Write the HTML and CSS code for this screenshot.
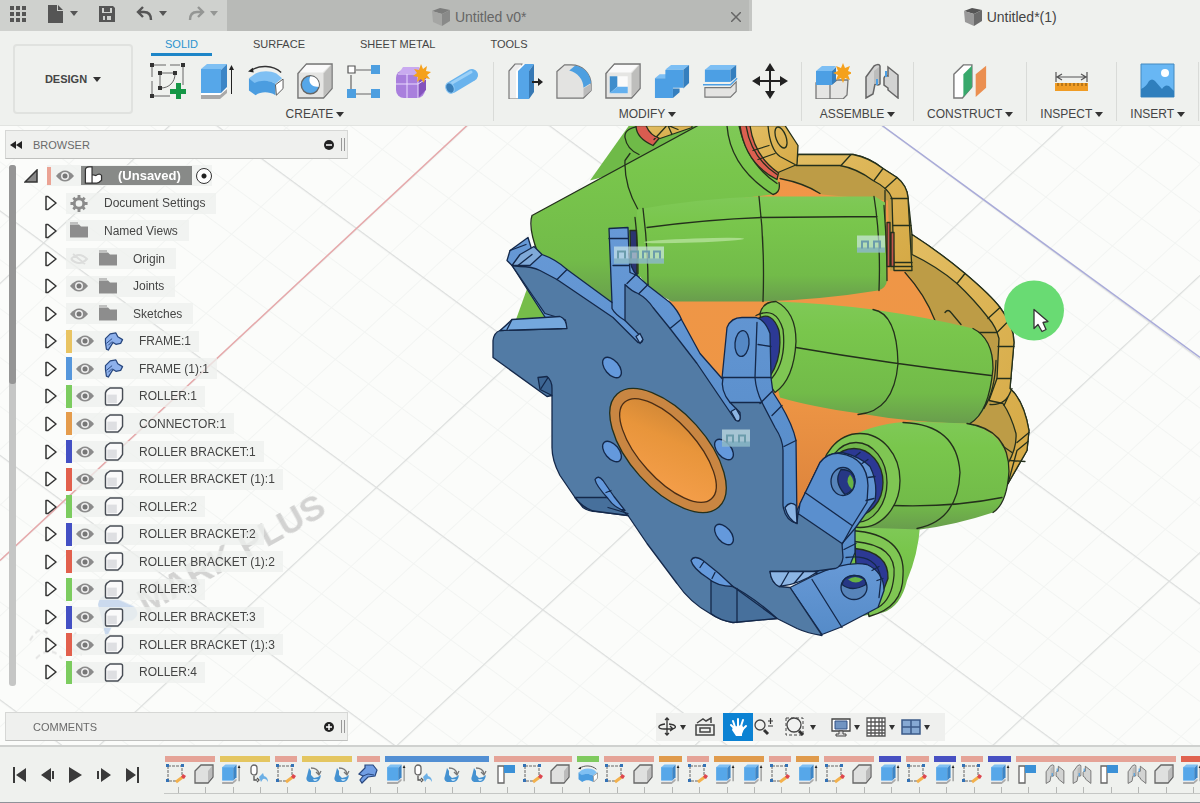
FILE: index.html
```html
<!DOCTYPE html>
<html lang="en">
<head>
    <meta charset="UTF-8">
    <meta name="viewport" content="width=device-width, initial-scale=1.0">
    <title>Untitled*(1)</title>
    <link rel="stylesheet" href="styles.css">
</head>
<body>
    <!-- Icon library -->
    <svg class="icon-library" aria-hidden="true">
        <symbol id="i-grid" viewBox="0 0 18 18"><path fill="#555" d="M1 1h4v4H1zM7 1h4v4H7zM13 1h4v4h-4zM1 7h4v4H1zM7 7h4v4H7zM13 7h4v4h-4zM1 13h4v4H1zM7 13h4v4H7zM13 13h4v4h-4z"/></symbol>
        <symbol id="i-file" viewBox="0 0 18 18"><path fill="#555" d="M1 0h9v6h6v12H1zM11 0l5 5h-5z"/></symbol>
        <symbol id="i-save" viewBox="0 0 18 18"><path fill="#555" fill-rule="evenodd" d="M1 1h14l2 2v14H1zM4 3v5h10V3h-2v4H6V3zM5 11v4h2v-4zM9 11v4h4v-4z"/></symbol>
        <symbol id="i-undo" viewBox="0 0 18 18"><path fill="none" stroke="#555" stroke-width="2.4" d="M7 2 2 7l5 5M2 7h6c5 0 7 3 7 8"/></symbol>
        <symbol id="i-redo" viewBox="0 0 18 18"><path fill="none" stroke="#949694" stroke-width="2.4" d="m11 2 5 5-5 5M16 7h-6c-5 0-7 3-7 8"/></symbol>
        <symbol id="i-cube" viewBox="0 0 18 18"><path fill="#555" d="M0 3 8 0l10 2-8 4z"/><path fill="#999" d="m0 3 10 3v12L1 14z"/><path fill="#6b6b6b" d="m10 6 8-4v11l-8 5z"/></symbol>

        <symbol id="i-sketch" viewBox="0 0 36 36">
            <path fill="none" stroke="#666" d="M4 2h12m4 0h10M2 4v10m0 4v13M33 4v18M4 33h16M10 10h14M10 10v14M25 11c0 8-6 14-14 14"/>
            <path fill="#333" d="M0 0h4v4H0zM31 0h4v4h-4zM0 31h4v4H0zM8 8h4v4H8zM23 8h4v4h-4zM8 23h4v4H8z"/>
            <path fill="#159746" d="M26 20h5v6h6v5h-6v6h-5v-6h-6v-5h6z"/>
        </symbol>
        <symbol id="i-extrude" viewBox="0 0 36 36">
            <path fill="#fff" d="M2 29h19l7-5v5l-6 5H2z"/><path fill="#a9a9a9" d="M2 32h19l7-6v4l-7 6H2z"/>
            <path fill="#7fc0f3" d="m2 6 6-5h20l-6 6H2z"/><path fill="#56a7e9" d="M2 6h20v24H2z"/><path fill="#3c85c6" d="m22 7 6-6v23l-6 6z"/>
            <path fill="#222" d="M32 6h1v25h-1zM30 7l2.500-5L35 7z"/>
        </symbol>
        <symbol id="i-revolve" viewBox="0 0 38 36">
            <path fill="none" stroke="#333" stroke-width="1.500" d="M3 7C12 1 26 1 35 9"/><path fill="#222" d="m0 8 5-4 1 5z"/>
            <path fill="#7fc0f3" d="m1 15 7-5c7-3 15-3 22 0l6 5-7 6c-6-4-15-4-22 0z"/><path fill="#4b9de0" d="M1 15l6 5c6-3 16-3 22 1v12c-7-4-15-4-21 0l-7-5z"/>
            <path fill="#fff" stroke="#555" d="m29 22 8-6v10l-7 7z"/>
        </symbol>
        <symbol id="i-hole" viewBox="0 0 38 38">
            <path fill="#e5e5e3" stroke="#777" stroke-width="1.500" d="M1 11 10 1h27v26L28 37H1z"/><path fill="#bebebc" d="m28 11 8-9v25l-8 9z"/><path fill="#fafafa" d="m3 10 7-8h25l-8 8z"/>
            <circle cx="14" cy="23" r="9.500" fill="#56a7e9" stroke="#666" stroke-width="1.500"/><path fill="#fff" d="M14 14c-3 7 2 12 9 11 1-6-3-11-9-11"/>
        </symbol>
        <symbol id="i-pattern" viewBox="0 0 36 36"><path stroke="#666" stroke-width="1.200" d="M10 7h16M5 12v14M10 31h16"/><path fill="#fff" stroke="#555" stroke-width="1.200" d="M2 3h7v7H2z"/><path fill="#4d9fe0" d="M25 2h9v9h-9zM1 26h9v9H1zM25 26h9v9h-9z"/></symbol>
        <symbol id="i-form" viewBox="0 0 36 36">
            <rect x="1" y="7" width="29" height="28" rx="8" fill="#a97fdd"/><path fill="#c9aaf0" d="M8 4h16l4 6H4z"/><path fill="#8453bd" d="m23 12 8-5v20l-8 8z"/>
            <path fill="none" stroke="#e9dbff" d="M12 11v24M1 21h22l8-5M3 11h20v24"/>
            <path fill="#f5a11c" d="m26 1 2 5 4-3-1 5 5 1-4 3 3 4-5-1-1 5-3-4-4 3 1-5-5-1 4-3-3-4 5 1z"/>
        </symbol>
        <symbol id="i-pipe" viewBox="0 0 36 36"><path stroke="#69b3ed" stroke-width="12" stroke-linecap="round" d="M8 24 28 12"/><path stroke="#9bd0f7" stroke-width="3" stroke-linecap="round" d="m8 20 19-11"/><ellipse cx="6" cy="25" rx="4" ry="5.500" transform="rotate(-25 6 25)" fill="#397eb8" stroke="#8cc8f5"/></symbol>

        <symbol id="i-presspull" viewBox="0 0 36 36"><path fill="#eee" stroke="#777" stroke-width="1.200" d="m2 8 6-7h7v35H2z"/><path fill="#fff" d="m9 8 7-7h3v34H9z"/><path fill="#55a5e8" d="m11 8 7-7h9l-5 7v28H11z"/><path fill="#3779b4" d="m22 8 5-7v28l-5 7z"/><path fill="#222" d="M25 18h6v-3l5 4-5 4v-3h-6z"/></symbol>
        <symbol id="i-fillet" viewBox="0 0 38 36"><path fill="#e3e3e1" stroke="#777" stroke-width="1.300" d="M1 8 9 1h7c12 0 21 9 21 21v6l-8 8H1z"/><path fill="#4d9fe0" d="M20 2c9 1 16 8 17 18l-8 5c0-8-6-16-15-18z"/><path fill="#bbb" d="m29 26 8-5v7l-8 7z"/></symbol>
        <symbol id="i-shell" viewBox="0 0 38 38"><path fill="#e5e5e3" stroke="#777" stroke-width="1.500" d="M1 11 10 1h27v26L28 37H1z"/><path fill="#bebebc" d="m28 11 8-9v25l-8 9z"/><path fill="#fafafa" d="m3 10 7-8h25l-8 8zM5 14h19v18H5z"/><path fill="#3e8dcc" d="M5 14h8v11l-8 7z"/><path fill="#64b0ee" d="M13 25h11v7H5z"/></symbol>
        <symbol id="i-combine" viewBox="0 0 38 36"><path fill="#7dbff4" d="m1 15 5-4h7V5l5-4h19l-6 5H14v9z"/><path fill="#4c9fe4" d="M1 15h11V6h19v19H20v11H1z"/><path fill="#357fbe" d="m31 6 6-5v19l-6 6zM20 26h7v4l-7 6z"/></symbol>
        <symbol id="i-split" viewBox="0 0 38 36"><path fill="#7dbff4" d="m2 6 6-5h27l-6 5z"/><path fill="#4c9fe4" d="M2 6h27v13H2z"/><path fill="#357fbe" d="m29 6 6-5v13l-6 5z"/><path fill="none" stroke="#4c9fe4" stroke-width="1.500" d="M0 22h29l7-7"/><path fill="#e4e4e2" stroke="#777" stroke-width="1.200" d="M2 25h27l6-6v10l-6 6H2z"/></symbol>
        <symbol id="i-move" viewBox="0 0 36 36"><path fill="#222" d="m18 0 5 8h-4v9h9v-4l8 5-8 5v-4h-9v9h4l-5 8-5-8h4v-9H8v4l-8-5 8-5v4h9V8h-4z"/></symbol>

        <symbol id="i-component" viewBox="0 0 36 36"><path fill="#e5e5e3" stroke="#777" stroke-width="1.300" d="M1 20h17l4-3h11l-1 15-4 4H1zM15 21v15"/><path fill="#7dbff4" d="m1 8 6-5h14l-4 5z"/><path fill="#4c9fe4" d="M1 8h16v14H1z"/><path fill="#357fbe" d="m17 8 4-4v14l-4 4z"/><path fill="#f5a11c" d="m28 0 2 5 5-2-2 5 5 2-5 2 2 5-5-2-2 5-2-5-5 2 2-5-5-2 5-2-2-5 5 2z"/></symbol>
        <symbol id="i-joint" viewBox="0 0 36 36"><path fill="#d2d3d2" stroke="#666" stroke-width="1.500" d="M2 14 10 3q5-3 6 0v18q-2 2-5 0L9 31l-7 4z"/><path fill="#bcbdbc" d="m10 8 5-4v16l-5 1z"/><path fill="#d2d3d2" stroke="#666" stroke-width="1.500" d="M20 15q1-3 4-2V4l10 8v23L24 27v-2l-4-3z"/><path fill="none" stroke="#4c9fe4" stroke-width="2" d="M13 16v6M22 8v6"/></symbol>
        <symbol id="i-plane" viewBox="0 0 38 36"><path fill="#fff" stroke="#777" stroke-width="1.500" d="M2 11 12 1h9v23L11 36H2z"/><path fill="#38a96c" d="M12 11 21 2v23l-9 10z"/><path fill="#eb8f50" d="M25 11 36 2v23L25 35z"/></symbol>
        <symbol id="i-measure" viewBox="0 0 36 36"><path fill="none" stroke="#555" stroke-width="1.200" d="M2 9v10M33 9v10M3 14h29M8 11l-5 3 5 3M27 11l5 3-5 3"/><path fill="#f09c24" d="M1 20h33v8H1z"/><path stroke="#80500b" d="M4 20v3m4-3v3m4-3v3m4-3v3m4-3v3m4-3v3m4-3v3m4-3v3"/></symbol>
        <symbol id="i-image" viewBox="0 0 36 36"><path fill="#68b7f4" stroke="#4289bf" d="M1 1h33v33H1z"/><path fill="#2f7fbd" d="M1 26q5-2 8-8 3-3 6 0l7 8q3-5 7-3l5 5v6H1z"/><circle cx="25" cy="10" r="4" fill="#fff"/></symbol>

        <symbol id="i-eye" viewBox="0 0 18 12"><path fill="#8b8b8b" d="M0 6Q9-5 18 6 9 17 0 6"/><circle cx="9" cy="6" r="4" fill="#eee"/><circle cx="9" cy="6" r="2.500" fill="#777"/></symbol>
        <symbol id="i-eye-off" viewBox="0 0 18 12"><path fill="none" stroke="#dcdddc" stroke-width="2" d="M1 6q8-8 16 0-8 8-16 0M3 1l12 10"/></symbol>
        <symbol id="i-folder" viewBox="0 0 20 16"><path fill="#8d8d8d" d="M1 0h8v1H1zM1 2h9l2 2h7v11H1z"/></symbol>
        <symbol id="i-gear" viewBox="0 0 20 20"><circle cx="10" cy="10" r="5" fill="none" stroke="#8b8b8b" stroke-width="3"/><path stroke="#8b8b8b" stroke-width="3" d="M10 1v4m0 10v4M1 10h4m10 0h4M4 4l2 2m8 8 2 2M16 4l-2 2M6 14l-2 2"/></symbol>
        <symbol id="i-body" viewBox="0 0 20 20"><path fill="#fafafa" stroke="#484d55" stroke-width="1.500" stroke-linejoin="round" d="M1 6q1-3 5-5h11q2 0 2 2v10q-2 4-5 6H3q-2 0-2-2z"/><path fill="#dedfe2" d="M3 8h10v9H3z"/></symbol>
        <symbol id="i-frame" viewBox="0 0 20 20"><path fill="#8eb1ec" stroke="#28477f" stroke-width="1.300" stroke-linejoin="round" d="M1 11V7l5-5 6-1 2 4 5 3-2 4-5 1-3-2-5 8-2-1z"/><path fill="none" stroke="#28477f" d="m2 12 6-5M4 14l4-4"/></symbol>
        <symbol id="i-assembly" viewBox="0 0 20 20"><path fill="#fff" stroke="#333" stroke-width="1.300" d="M2 4q0-3 4-3h3v8l4 1q4-3 6 0v5q-3 3-5 3H2zM9 9v9"/></symbol>
        <symbol id="i-expand" viewBox="0 0 12 16"><path fill="none" stroke="#333" stroke-width="1.500" stroke-linejoin="round" d="M1 1.500h2L11 8l-8 6.500H1z"/></symbol>
        <symbol id="i-open" viewBox="0 0 14 14"><path fill="#888" stroke="#333" stroke-width="1.500" d="M13 1v12H1z"/></symbol>

        <symbol id="t-sketch" viewBox="0 0 20 20"><path fill="none" stroke="#666" stroke-dasharray="3 1" d="M2 2h14v11M2 2v15h9"/><path fill="#3472b5" d="M0 0h3v3H0zM15 0h3v3h-3zM0 15h3v3H0z"/><path stroke="#f3b14c" stroke-width="3" d="m10 18 8-6"/><path fill="#dd4650" d="m17 10 3 2-2 3-3-2z"/></symbol>
        <symbol id="t-box" viewBox="0 0 20 20"><path fill="#dfe0df" stroke="#666" stroke-width="1.300" d="m1 7 6-6h12v12l-5 6H1z"/><path fill="#bbb" d="m14 7 4-5v11l-4 5z"/></symbol>
        <symbol id="t-copy" viewBox="0 0 20 20"><rect x="2" y="1" width="6" height="10" rx="3" fill="#fff" stroke="#666" stroke-width="1.300"/><path fill="none" stroke="#555" stroke-width="1.300" d="M5 12v4h3M8 14l2 2-2 2"/><path fill="#6cb0e6" d="m10 13 4-4 1 3q4 1 4 6-2-4-5-3l-2 3z"/></symbol>
        <symbol id="t-ground" viewBox="0 0 20 20"><path fill="#4592d1" d="m6 4 2 3v4l3 3 4-1 3-2q-1 6-5 7H6q-4-2-2-6z"/><path fill="#bcdcf4" d="M10 15h5l-2 2h-2z"/><path fill="none" stroke="#777" stroke-width="1.300" d="M8 4q7 0 8 6m-3-2 3 3 2-4"/></symbol>
        <symbol id="t-frame" viewBox="0 0 20 20"><path fill="#719ee4" stroke="#28477f" stroke-width="1.200" d="m1 10 6-6V1h8l4 5-2 6-7 1-6 6-2-3 3-4z"/><path fill="none" stroke="#28477f" d="m5 12 5-2 6 1"/></symbol>
        <symbol id="t-plane" viewBox="0 0 20 20"><path fill="#fff" stroke="#666" stroke-width="1.300" d="M2 2h6v17H2z"/><path fill="#3b91d7" d="M8 1h11v8H8z"/></symbol>

        <symbol id="p-first" viewBox="0 0 16 16"><path fill="#3a3a3a" d="M1 0h2v16H1zM14 1v14L4 8z"/></symbol>
        <symbol id="p-prev" viewBox="0 0 16 16"><path fill="#3a3a3a" d="M11 1v14L1 8zM12 4h2v8h-2z"/></symbol>
        <symbol id="p-play" viewBox="0 0 16 16"><path fill="#3a3a3a" d="M1 0v16l13-8z"/></symbol>
        <symbol id="p-next" viewBox="0 0 16 16"><path fill="#3a3a3a" d="M5 1v14l10-7zM1 4h2v8H1z"/></symbol>
        <symbol id="p-last" viewBox="0 0 16 16"><path fill="#3a3a3a" d="M2 1v14l10-7zM13 0h2v16h-2z"/></symbol>

        <symbol id="n-orbit" viewBox="0 0 20 20"><path fill="none" stroke="#333" stroke-width="1.300" d="M8 7C0 8 0 12 7 12h9M12 7c8 1 8 4 3 5M13 9l3 3-3 2M10 1v17M8 3l2-2 2 2M8 16l2 2 2-2"/></symbol>
        <symbol id="n-look" viewBox="0 0 20 20"><path fill="none" stroke="#444" stroke-width="1.500" d="M1 8h18v10H1zM5 11h10v4H5zM2 6l6-4 3 2 5-3v5"/></symbol>
        <symbol id="n-hand" viewBox="0 0 20 20"><path fill="none" stroke="#fff" stroke-width="2" stroke-linecap="round" d="M6 11 3 8M7 10 5 4M10 9V2M13 9l2-6M15 12l3-3"/><path fill="#fff" d="m5 10 9-2 2 4-2 5v2H8l-4-6z"/></symbol>
        <symbol id="n-zoom" viewBox="0 0 20 20"><circle cx="6" cy="8" r="5" fill="none" stroke="#444" stroke-width="1.300"/><path stroke="#333" stroke-width="3" d="m10 13 4 4"/><path stroke="#333" stroke-width="1.200" d="M14 4h5M16.500 1v6M14 9h5"/></symbol>
        <symbol id="n-fit" viewBox="0 0 20 20"><path fill="none" stroke="#444" stroke-dasharray="3 2" d="M1 1h17v17H1z"/><circle cx="9" cy="8" r="7" fill="#f1f2f1" stroke="#444" stroke-width="1.300"/><path stroke="#333" stroke-width="3" d="m14 14 4 4"/></symbol>
        <symbol id="n-display" viewBox="0 0 20 20"><path fill="#fff" stroke="#444" stroke-width="1.300" d="M1 2h18v12H1z"/><path fill="#7194c2" stroke="#335184" d="M4 4h12v8H4z"/><path fill="#ddd" stroke="#444" d="M8 14h4v3h3v2H5v-2h3z"/></symbol>
        <symbol id="n-grid" viewBox="0 0 20 20"><path fill="#fff" stroke="#555" stroke-width="1.300" d="M1 1h18v18H1zM1 5h18M1 9h18M1 13h18M1 16h18M5 1v18M9 1v18M13 1v18M16 1v18"/></symbol>
        <symbol id="n-views" viewBox="0 0 20 20"><path fill="#86a9d3" stroke="#3b5a88" stroke-width="1.500" d="M1 3h18v14H1zM1 10h18M10 3v14"/></symbol>
    </svg>

    <header class="title-bar">
        <div class="quick-tools">
            <button type="button" aria-label="Data panel"><svg><use href="#i-grid"/></svg></button>
            <button type="button" aria-label="File"><svg><use href="#i-file"/></svg><span class="caret"></span></button>
            <button type="button" aria-label="Save"><svg><use href="#i-save"/></svg></button>
            <button type="button" aria-label="Undo"><svg><use href="#i-undo"/></svg><span class="caret"></span></button>
            <button type="button" aria-label="Redo" class="faded"><svg><use href="#i-redo"/></svg><span class="caret"></span></button>
        </div>
        <div class="doc-tab">
            <a href="#"><svg><use href="#i-cube"/></svg>Untitled v0*</a>
            <button type="button" class="close" aria-label="Close tab"><svg viewBox="0 0 10 10"><path stroke="#666" stroke-width="1.500" d="m0 0 10 10M10 0 0 10"/></svg></button>
        </div>
        <div class="doc-tab active"><a href="#"><svg><use href="#i-cube"/></svg>Untitled*(1)</a></div>
    </header>

    <div class="ribbon">
        <button type="button" class="design">DESIGN <span class="caret"></span></button>
        <div class="ribbon-main">
            <nav class="ribbon-tabs">
                <a href="#" class="current">SOLID</a>
                <a href="#">SURFACE</a>
                <a href="#">SHEET METAL</a>
                <a href="#">TOOLS</a>
            </nav>
            <div class="groups">
                <div class="group">
                    <div class="tools">
                        <button type="button" aria-label="Create Sketch"><svg><use href="#i-sketch"/></svg></button>
                        <button type="button" aria-label="Extrude"><svg><use href="#i-extrude"/></svg></button>
                        <button type="button" aria-label="Revolve"><svg><use href="#i-revolve"/></svg></button>
                        <button type="button" aria-label="Hole"><svg><use href="#i-hole"/></svg></button>
                        <button type="button" aria-label="Pattern"><svg><use href="#i-pattern"/></svg></button>
                        <button type="button" aria-label="Create Form"><svg><use href="#i-form"/></svg></button>
                        <button type="button" aria-label="Pipe"><svg><use href="#i-pipe"/></svg></button>
                    </div>
                    <button type="button" class="group-name">CREATE <span class="caret"></span></button>
                </div>
                <div class="group">
                    <div class="tools">
                        <button type="button" aria-label="Press Pull"><svg><use href="#i-presspull"/></svg></button>
                        <button type="button" aria-label="Fillet"><svg><use href="#i-fillet"/></svg></button>
                        <button type="button" aria-label="Shell"><svg><use href="#i-shell"/></svg></button>
                        <button type="button" aria-label="Combine"><svg><use href="#i-combine"/></svg></button>
                        <button type="button" aria-label="Split Body"><svg><use href="#i-split"/></svg></button>
                        <button type="button" aria-label="Move"><svg><use href="#i-move"/></svg></button>
                    </div>
                    <button type="button" class="group-name">MODIFY <span class="caret"></span></button>
                </div>
                <div class="group">
                    <div class="tools">
                        <button type="button" aria-label="New Component"><svg><use href="#i-component"/></svg></button>
                        <button type="button" aria-label="Joint"><svg><use href="#i-joint"/></svg></button>
                    </div>
                    <button type="button" class="group-name">ASSEMBLE <span class="caret"></span></button>
                </div>
                <div class="group">
                    <div class="tools"><button type="button" aria-label="Offset Plane"><svg><use href="#i-plane"/></svg></button></div>
                    <button type="button" class="group-name">CONSTRUCT <span class="caret"></span></button>
                </div>
                <div class="group">
                    <div class="tools"><button type="button" aria-label="Measure"><svg><use href="#i-measure"/></svg></button></div>
                    <button type="button" class="group-name">INSPECT <span class="caret"></span></button>
                </div>
                <div class="group">
                    <div class="tools"><button type="button" aria-label="Insert Image"><svg><use href="#i-image"/></svg></button></div>
                    <button type="button" class="group-name">INSERT <span class="caret"></span></button>
                </div>
            </div>
        </div>
    </div>

    <main class="workspace">
        <!-- 3D model -->
        <svg class="scene" viewBox="0 125 1200 620" preserveAspectRatio="xMidYMid slice" role="img" aria-label="Mecanum wheel assembly">
            <defs>
                <pattern id="minor" width="2" height="2" patternUnits="userSpaceOnUse" patternTransform="matrix(16.64 12.23 -14.68 13.66 210 364)"><path d="M0 0h2M0 0v2" stroke="#f2f4f2" stroke-width=".1"/></pattern>
                <pattern id="major" width="10" height="10" patternUnits="userSpaceOnUse" patternTransform="matrix(16.64 12.23 -14.68 13.66 210 364)"><path d="M0 0h10M0 0v10" stroke="#dddfde" stroke-width=".12"/></pattern>
                <linearGradient id="green" x1="0" y1="0" x2="0" y2="1"><stop offset="0" stop-color="#7fc957"/><stop offset=".25" stop-color="#79c64c"/><stop offset=".75" stop-color="#72bb49"/><stop offset="1" stop-color="#699d4d"/></linearGradient>
                <linearGradient id="orange" x1="0" y1="0" x2="1" y2="1"><stop offset="0" stop-color="#c98335"/><stop offset=".4" stop-color="#e8953b"/><stop offset="1" stop-color="#f7a04d"/></linearGradient>
                <linearGradient id="cone" x1="0" y1="0" x2="0" y2="1"><stop offset="0" stop-color="#f09648"/><stop offset=".6" stop-color="#ee9645"/><stop offset="1" stop-color="#d87f3a"/></linearGradient>
                <linearGradient id="gold" x1="0" y1="0" x2="1" y2="1"><stop offset="0" stop-color="#e2bd62"/><stop offset="1" stop-color="#d5a945"/></linearGradient>
                <linearGradient id="edge" x1="0" y1="0" x2="0" y2="1"><stop offset="0" stop-color="#6799d6"/><stop offset="1" stop-color="#558bc8"/></linearGradient>
            </defs>
            <rect y="125" width="1200" height="620" fill="#fbfcfa"/>
            <rect y="125" width="1200" height="620" fill="url(#minor)"/>
            <rect y="125" width="1200" height="620" fill="url(#major)"/>
            <path d="M467 125 0 560" stroke="#e7a9ab" stroke-width="1.500"/>
            <path d="m882 125 318 232" stroke="#a9abd9" stroke-width="1.500"/>

            <g class="watermark">
                <path fill="#9bb9e2" d="M98 604q2-12 14-8l22 10q8 8-2 14l-18 2-8 16-4-18z"/>
                <path d="M30 640q10-18 20-4m-14 22q14-14 26 0m14-26q-12 16 6 22" fill="none" stroke="#ccc" stroke-width="2" stroke-dasharray="5 4"/>
                <text transform="translate(146 614) rotate(-29)">MARK PLUS</text>
            </g>

            <g stroke="#24301c" stroke-width="1.300" stroke-linejoin="round" stroke-linecap="round">
                <!-- rear roller and connector -->
                <path fill="#6fba48" stroke="none" d="M629 125 590 180l110-30v-25z"/>
                <path fill="none" d="M645 125c-14 1-21 5-20 12q2 12 14 17"/>
                <path fill="#d95c50" d="M636 125c0 10 8 16 17 20l6-7-10-13z"/>
                <path fill="url(#gold)" d="M646 125q4 10 14 13l32-11v-2zM654 139l12-13m6 8-4-9m0 0 10 4"/>
                <path fill="#76bd4a" stroke="none" d="m530 280-14 39h50z"/>

                <!-- gold frame -->
                <path fill="#bd9c46" d="M778 153 798 154h55q16 3 30 14l14 9q10 8 11 20l4 37q28 18 53 39 26 22 35 34 14 18 14 35l-4 46q14 12 19 42l-2 20-19 33-80-30-180-250z"/>
                <path fill="url(#cone)" stroke="none" d="M760 172q35 6 62 22l66 6 2 70h15q20 22 31 52l-10 110-70 10-60 95-126-170-6-60z"/>
                <path fill="none" d="M780 178q25 5 40 15M905 272q20 22 30 48M945 312q3-4 6 0l10 12"/>
                <path fill="url(#gold)" d="M798 154h55q16 3 30 14l14 9q10 8 11 20l4 73h-18l-2-72q-3-10-19-18-16-12-33-15h-44z"/>
                <path fill="none" d="m851 154-10 11M883 168l-9 12M897 177l-12 11M891 198h17M893 225h18M894 262h18M894 266h18M885 190v30"/>
                <path fill="url(#gold)" d="M912 234q28 18 53 39 26 22 35 34 14 18 14 35l-4 46q14 12 19 42l-2 20-19 33v-20q9-16 8-30-5-18-13-30l-14-3 8-22 2-40q-3-12-11-21-14-18-31-34-20-17-45-29z"/>
                <path fill="none" d="m965 273-8 10M1000 307l-12 11M1009 320l-12 12M998 346h16M997 378h14M972 332h25M1012 388l-8 17M970 423l42 29M1017 442l12-10M1017 450l11-9M1010 460l15 1M990 404q16 1 21-14M1008 483l9-33"/>

                <!-- upper roller -->
                <path fill="url(#green)" stroke="none" d="M532 215 698 125h62l19 60q0 8-7 9l-132 16v85l-28 10-74-50q-9-25-6-40z"/>
                <path fill="none" d="M532 215 698 125M532 215q-4 12 6 38M625 160q-1 25 13 49M727 125q3 42 46 69 8-2 6-12M739 125q8 38 38 58M625 160l5-7"/>
                <path fill="#dc6050" d="M740 125q5 38 37 54l2-9q-22-15-26-45z"/>
                <path fill="none" d="M746 125q5 32 31 49"/>
                <path fill="url(#gold)" d="M750 125q4 30 28 47l19-8 1-19-13-20z"/>
                <path fill="none" d="M768 125q2 24 12 31l15 8M753 150l16-5M758 159l17-6"/>
                <ellipse cx="781" cy="137" rx="5" ry="11" transform="rotate(-20 781 137)" fill="none"/>

                <!-- roller 2 -->
                <path fill="#2b3470" d="M630 230h7v44h-6z"/>
                <path fill="url(#green)" stroke="none" d="M637 209Q700 198 760 196h115l10 6 2 78q-1 8-9 10-55 9-115 11h-91q-24-12-34-28z"/>
                <path fill="none" d="M647 227q60-8 115-10l115-1M759 196q6 50 4 105M643 208q5 40 5 76M635 217q3 25 3 56M874 196q7 44 5 94M884 205q3 40 3 75"/>
                <ellipse cx="694" cy="240" rx="50" ry="2" fill="#a9dc8b" stroke="none" transform="rotate(-2 694 240)"/>
                <path fill="#c4554b" d="M887 222h3v44h-3zM891 232h3v34h-3z"/>

                <!-- roller 3 -->
                <path fill="url(#green)" stroke="none" d="M760 316q2-14 17-15 50 2 96 8 56 8 100 19 22 12 20 42-2 42-23 53-60-1-110-10-50-7-80-16z"/>
                <path fill="none" d="M873 309q24 4 25 54-4 48-40 51M796 347q92 16 195 28M973 328q20 10 20 40-4 44-23 55M996 360q-1 30-12 48"/>
                <path fill="#7fc653" d="M760 313q3-12 16-12 20 10 20 40-2 38-21 51l-8-12z"/>
                <path fill="none" d="M756 315q20-10 27 14 4 34-14 52"/>
                <path fill="#2c3994" d="M758 318q14-8 21 12 4 26-9 46z"/>

                <!-- roller 5 -->
                <path fill="url(#green)" stroke="none" d="M850 526h70q-2 28-13 54-6 26-24 32l-30 5z"/>
                <path fill="#7fc653" d="M852 530q54 4 51 45 0 32-34 41z"/>
                <path fill="none" d="M855 541q42 4 39 34-2 24-16 32"/>
                <path fill="#2c3994" d="M855 548q34 4 33 30l-7 18-25-30z"/>

                <!-- roller 4 -->
                <path fill="url(#green)" stroke="none" d="M850 436q28-14 63-15l54 2q40 8 42 47-2 32-16 42-36 12-73 17l-60-2z"/>
                <path fill="none" d="M903 422q54 2 57 50-2 48-43 56M893 505q60 2 109-8M967 423q42 6 42 48-2 32-16 41"/>
                <ellipse cx="860" cy="480" rx="40" ry="47" fill="#7fc653"/>
                <ellipse cx="856" cy="482" rx="31" ry="40" fill="#72b84b"/>
                <ellipse cx="854" cy="482" rx="29" ry="34" fill="#2c3994"/>

                <g stroke="#14284a">
                <!-- brackets -->
                <path fill="url(#edge)" d="M797 510 820 462q8-10 22-10 18 4 28 14 8 16 5 34l-20 28v24l-8 20-50 2z"/>
                <path fill="#5a8fce" d="m800 503 20-41q8-10 20-9 27 4 28 32l-1 17-15 24-10 18-44-28z"/>
                <path fill="none" d="m805 492 47 33M868 477l7-1M866 500l8-2M855 456l5-4M862 463l6-4M842 543l13-15M844 549l12-6"/>
                <ellipse cx="843" cy="481" rx="12" ry="14" fill="#5784ba"/>
                <path fill="#263785" d="M841 469q-8 12 4 25 9-3 10-13-1-12-14-12"/>
                <path fill="#67b344" stroke="none" d="M850 474q-6 7 2 15 4-8-2-15"/>
                <path fill="url(#edge)" d="M790 587 814 575Q846 560 867 564 884 572 884 590L878 607 840 627 822 634Z"/>
                <path fill="none" d="M846 557q32-4 35 22l-2 18M872 570l7-4M877 580l6-2M812 579l30 48"/>
                <ellipse cx="854" cy="587" rx="13" ry="12" fill="#5784ba"/>
                <path fill="#263785" d="M842 584q10 8 24 0 0-9-12-9-11 1-12 9"/>
                <path fill="#67b344" stroke="none" d="M848 579q8 6 15 0-8-5-15 0"/>

                <!-- blue frame, side walls -->
                <path fill="url(#edge)" d="M507 260 510 250 528 237 532 250 542 254Q556 259 567 269L612 302 609 228 628 227 629 253Q630 268 637 275L648 285 670 302Q678 310 682 320L700 353 722 378 727 327Q731 317 742 317L756 317Q765 319 770 333L771 377 773 392 780 403Q793 425 796 440L797 523 785 520 700 480 560 340 512 265Z"/>
                <!-- blue frame, front face -->
                <path fill="#527ba5" d="M512 265 520 266Q532 266 540 270L557 279 613 317 638 342Q644 343 642 337L625 320 625 284Q632 291 638 293 647 298 653 307L670 328 697 363 735 419Q741 424 740 412L730 402 762 402 775 427Q783 439 783 450L783 505Q785 520 797 523L798 513 842 543 843 557Q842 566 835 568L813 571 770 571Q772 583 779 586L790 587 822 635Q808 633 797 628L777 618 733 622Q720 620 710 613 690 602 677 583L647 543 628 515 597 511Q588 511 583 507L575 497 560 475Q552 460 552 447L552 395 547 396 493 357 493 340Q494 332 500 330L562 328Q568 325 565 319L545 313Z"/>
                <path fill="#74a7dd" d="M500 330Q506 325 512 319L560 316Q566 318 567 328Z"/>
                <path fill="#7fa9d8" d="M512 265 520 254 534 246 542 254 530 265Z"/>
                <path fill="none" d="M510 250 526 244M518 265 532 254M557 279 567 269M512 319 507 329M609 238H628M613 265H629M627 283 637 273M639 293 648 284M670 328 681 319M723 377H771M758 344 771 346M760 403 772 391M772 415 782 405M784 446 796 440M612 302V308Q615 314 625 320"/>
                <path fill="none" d="M757 322 755 377Q756 390 762 402M723 377Q720 390 730 402"/>
                <path fill="none" d="M629 253 630 272 637 275"/>
                <path fill="#8cb5e4" d="M731 411 736 408 740 415Q741 422 736 420ZM636 336 640 333 643 339 640 343ZM785 507Q790 500 796 505L797 523Q788 519 785 507Z"/>
                <ellipse cx="742" cy="343" rx="7" ry="13" fill="#5488c5" transform="rotate(5 742 343)"/>
                <g fill="#6499dc">
                    <ellipse cx="612" cy="367" rx="7" ry="12" transform="rotate(-40 612 367)"/>
                    <ellipse cx="612" cy="451" rx="7" ry="12" transform="rotate(-40 612 451)"/>
                    <ellipse cx="724" cy="449" rx="7" ry="12" transform="rotate(-40 724 449)"/>
                    <ellipse cx="724" cy="534" rx="7" ry="12" transform="rotate(-40 724 534)"/>
                </g>
                <path fill="#47709c" d="M575 497H608L628 515 597 511Q585 510 575 497ZM711 580V613Q720 620 733 622L777 618Q752 595 727 583Z"/>
                <path fill="#6499dc" d="M595 479q3-5 8 1l11 16 11 14q-10-2-17-12-12-13-13-19zM606 492l5-2M691 560q3-6 12 0l16 13 14 13q-16 0-26-9-14-9-16-17zM700 567l4-6M712 578l3-6"/>
                <path fill="#8cb5e4" d="M770 571H818Q800 584 779 586 771 582 770 571ZM781 585 789 571M794 583 804 571"/>
                <path fill="#3c6593" d="M538 377 547 376Q552 380 552 388V395L540 389Z"/>
                <path fill="none" d="M737 588V622M541 388 548 377M608 507 628 513M733 586 777 618"/>
                </g>

                <!-- centre bore -->
                <ellipse cx="668" cy="450" rx="76" ry="38" transform="rotate(48 668 450)" fill="#c98642"/>
                <ellipse cx="668" cy="450" rx="65" ry="28" transform="rotate(48 668 450)" fill="url(#orange)" stroke="#4a2d15"/>
            </g>

            <!-- joint markers -->
            <g id="markers">
                <path fill="#d4ecec" fill-opacity=".65" d="M614 246h50v17h-50zM857 235h28v17h-28zM722 429h28v17h-28z"/>
                <path fill="#6da2b5" fill-opacity=".6" d="M614 258h50v5h-50zM857 247h28v5h-28zM722 441h28v5h-28z"/>
                <path fill="none" stroke="#6b9cab" stroke-width="2" d="M618 258v-7h7v7m6 0v-7h7v7m5 0v-7h6v7m5 0v-7h6v7M862 248v-7h6v7m6 0v-7h6v7M727 442v-7h6v7m6 0v-7h6v7"/>
            </g>

            <!-- pointer highlight -->
            <circle cx="1034" cy="310" r="30" fill="#69db73"/>
            <path fill="#fff" stroke="#333" stroke-width="1.300" stroke-linejoin="round" d="M1034 309v19l4-4 4 7 4-2-3-7 5-1z"/>
        </svg>

        <aside class="side">
            <div class="panel-head">
                <button type="button" aria-label="Collapse browser"><svg viewBox="0 0 12 8"><path fill="#222" d="M6 0v8L0 4zM12 0v8L6 4z"/></svg></button>
                <h2>BROWSER</h2>
                <button type="button" aria-label="Hide browser"><svg viewBox="0 0 10 10"><circle cx="5" cy="5" r="5" fill="#222"/><path stroke="#fff" stroke-width="1.500" d="M2 5h6"/></svg></button>
                <span class="grip"></span>
            </div>
            <div class="tree-wrap">
                <div class="scrollbar"><div class="thumb"></div></div>
                <ul class="tree">
                    <li class="root">
                        <button type="button" class="toggle" aria-label="Collapse"><svg><use href="#i-open"/></svg></button>
                        <div class="chip"><i class="swatch salmon"></i><svg class="eye"><use href="#i-eye"/></svg><span class="doc-name"><svg><use href="#i-assembly"/></svg>(Unsaved)</span><input type="radio" name="active" aria-label="Activate component" checked></div>
                    </li>
                    <li><button type="button" class="toggle" aria-label="Expand"><svg><use href="#i-expand"/></svg></button><div class="chip"><svg><use href="#i-gear"/></svg><span>Document Settings</span></div></li>
                    <li><button type="button" class="toggle" aria-label="Expand"><svg><use href="#i-expand"/></svg></button><div class="chip"><svg><use href="#i-folder"/></svg><span>Named Views</span></div></li>
                    <li><button type="button" class="toggle" aria-label="Expand"><svg><use href="#i-expand"/></svg></button><div class="chip"><svg class="eye"><use href="#i-eye-off"/></svg><svg><use href="#i-folder"/></svg><span>Origin</span></div></li>
                    <li><button type="button" class="toggle" aria-label="Expand"><svg><use href="#i-expand"/></svg></button><div class="chip"><svg class="eye"><use href="#i-eye"/></svg><svg><use href="#i-folder"/></svg><span>Joints</span></div></li>
                    <li><button type="button" class="toggle" aria-label="Expand"><svg><use href="#i-expand"/></svg></button><div class="chip"><svg class="eye"><use href="#i-eye"/></svg><svg><use href="#i-folder"/></svg><span>Sketches</span></div></li>
                    <li><button type="button" class="toggle" aria-label="Expand"><svg><use href="#i-expand"/></svg></button><div class="chip part"><i class="swatch yellow"></i><svg class="eye"><use href="#i-eye"/></svg><svg><use href="#i-frame"/></svg><span>FRAME:1</span></div></li>
                    <li><button type="button" class="toggle" aria-label="Expand"><svg><use href="#i-expand"/></svg></button><div class="chip part"><i class="swatch blue"></i><svg class="eye"><use href="#i-eye"/></svg><svg><use href="#i-frame"/></svg><span>FRAME (1):1</span></div></li>
                    <li><button type="button" class="toggle" aria-label="Expand"><svg><use href="#i-expand"/></svg></button><div class="chip part"><i class="swatch green"></i><svg class="eye"><use href="#i-eye"/></svg><svg><use href="#i-body"/></svg><span>ROLLER:1</span></div></li>
                    <li><button type="button" class="toggle" aria-label="Expand"><svg><use href="#i-expand"/></svg></button><div class="chip part"><i class="swatch orange"></i><svg class="eye"><use href="#i-eye"/></svg><svg><use href="#i-body"/></svg><span>CONNECTOR:1</span></div></li>
                    <li><button type="button" class="toggle" aria-label="Expand"><svg><use href="#i-expand"/></svg></button><div class="chip part"><i class="swatch indigo"></i><svg class="eye"><use href="#i-eye"/></svg><svg><use href="#i-body"/></svg><span>ROLLER BRACKET:1</span></div></li>
                    <li><button type="button" class="toggle" aria-label="Expand"><svg><use href="#i-expand"/></svg></button><div class="chip part"><i class="swatch red"></i><svg class="eye"><use href="#i-eye"/></svg><svg><use href="#i-body"/></svg><span>ROLLER BRACKET (1):1</span></div></li>
                    <li><button type="button" class="toggle" aria-label="Expand"><svg><use href="#i-expand"/></svg></button><div class="chip part"><i class="swatch green"></i><svg class="eye"><use href="#i-eye"/></svg><svg><use href="#i-body"/></svg><span>ROLLER:2</span></div></li>
                    <li><button type="button" class="toggle" aria-label="Expand"><svg><use href="#i-expand"/></svg></button><div class="chip part"><i class="swatch indigo"></i><svg class="eye"><use href="#i-eye"/></svg><svg><use href="#i-body"/></svg><span>ROLLER BRACKET:2</span></div></li>
                    <li><button type="button" class="toggle" aria-label="Expand"><svg><use href="#i-expand"/></svg></button><div class="chip part"><i class="swatch red"></i><svg class="eye"><use href="#i-eye"/></svg><svg><use href="#i-body"/></svg><span>ROLLER BRACKET (1):2</span></div></li>
                    <li><button type="button" class="toggle" aria-label="Expand"><svg><use href="#i-expand"/></svg></button><div class="chip part"><i class="swatch green"></i><svg class="eye"><use href="#i-eye"/></svg><svg><use href="#i-body"/></svg><span>ROLLER:3</span></div></li>
                    <li><button type="button" class="toggle" aria-label="Expand"><svg><use href="#i-expand"/></svg></button><div class="chip part"><i class="swatch indigo"></i><svg class="eye"><use href="#i-eye"/></svg><svg><use href="#i-body"/></svg><span>ROLLER BRACKET:3</span></div></li>
                    <li><button type="button" class="toggle" aria-label="Expand"><svg><use href="#i-expand"/></svg></button><div class="chip part"><i class="swatch red"></i><svg class="eye"><use href="#i-eye"/></svg><svg><use href="#i-body"/></svg><span>ROLLER BRACKET (1):3</span></div></li>
                    <li><button type="button" class="toggle" aria-label="Expand"><svg><use href="#i-expand"/></svg></button><div class="chip part"><i class="swatch green"></i><svg class="eye"><use href="#i-eye"/></svg><svg><use href="#i-body"/></svg><span>ROLLER:4</span></div></li>
                </ul>
            </div>
            <div class="panel-head comments">
                <h2>COMMENTS</h2>
                <button type="button" aria-label="Show comments"><svg viewBox="0 0 10 10"><circle cx="5" cy="5" r="5" fill="#222"/><path stroke="#fff" stroke-width="1.500" d="M2 5h6M5 2v6"/></svg></button>
                <span class="grip"></span>
            </div>
        </aside>

        <div class="view-area">
            <div class="nav-bar">
                <button type="button" aria-label="Orbit"><svg><use href="#n-orbit"/></svg><span class="caret"></span></button>
                <button type="button" aria-label="Look At"><svg><use href="#n-look"/></svg></button>
                <button type="button" aria-label="Pan" class="on"><svg><use href="#n-hand"/></svg></button>
                <button type="button" aria-label="Zoom"><svg><use href="#n-zoom"/></svg></button>
                <button type="button" aria-label="Fit" class="fit"><svg><use href="#n-fit"/></svg><span class="caret"></span></button>
                <button type="button" aria-label="Display Settings"><svg><use href="#n-display"/></svg><span class="caret"></span></button>
                <button type="button" aria-label="Grid and Snaps"><svg><use href="#n-grid"/></svg><span class="caret"></span></button>
                <button type="button" aria-label="Viewports"><svg><use href="#n-views"/></svg><span class="caret"></span></button>
            </div>
        </div>
    </main>

    <footer class="timeline">
        <div class="playback">
            <button type="button" aria-label="Go to start"><svg><use href="#p-first"/></svg></button>
            <button type="button" aria-label="Step back"><svg><use href="#p-prev"/></svg></button>
            <button type="button" aria-label="Play"><svg><use href="#p-play"/></svg></button>
            <button type="button" aria-label="Step forward"><svg><use href="#p-next"/></svg></button>
            <button type="button" aria-label="Go to end"><svg><use href="#p-last"/></svg></button>
        </div>
        <ol class="features">
            <li class="pink span-2"><svg><use href="#t-sketch"/></svg><svg><use href="#t-box"/></svg></li>
            <li class="yellow span-2"><svg><use href="#i-extrude"/></svg><svg><use href="#t-copy"/></svg></li>
            <li class="pink"><svg><use href="#t-sketch"/></svg></li>
            <li class="yellow span-2"><svg><use href="#t-ground"/></svg><svg><use href="#t-ground"/></svg></li>
            <li class="pink"><svg><use href="#t-frame"/></svg></li>
            <li class="blue span-4"><svg><use href="#i-extrude"/></svg><svg><use href="#t-copy"/></svg><svg><use href="#t-ground"/></svg><svg><use href="#t-ground"/></svg></li>
            <li class="pink span-3"><svg><use href="#t-plane"/></svg><svg><use href="#t-sketch"/></svg><svg><use href="#t-box"/></svg></li>
            <li class="green"><svg><use href="#i-revolve"/></svg></li>
            <li class="pink span-2"><svg><use href="#t-sketch"/></svg><svg><use href="#t-box"/></svg></li>
            <li class="orange"><svg><use href="#i-extrude"/></svg></li>
            <li class="pink"><svg><use href="#t-sketch"/></svg></li>
            <li class="orange span-2"><svg><use href="#i-extrude"/></svg><svg><use href="#i-extrude"/></svg></li>
            <li class="pink"><svg><use href="#t-sketch"/></svg></li>
            <li class="orange"><svg><use href="#i-extrude"/></svg></li>
            <li class="pink span-2"><svg><use href="#t-sketch"/></svg><svg><use href="#t-box"/></svg></li>
            <li class="indigo"><svg><use href="#i-extrude"/></svg></li>
            <li class="pink"><svg><use href="#t-sketch"/></svg></li>
            <li class="indigo"><svg><use href="#i-extrude"/></svg></li>
            <li class="pink"><svg><use href="#t-sketch"/></svg></li>
            <li class="indigo"><svg><use href="#i-extrude"/></svg></li>
            <li class="pink span-6"><svg><use href="#t-plane"/></svg><svg><use href="#i-joint"/></svg><svg><use href="#i-joint"/></svg><svg><use href="#t-plane"/></svg><svg><use href="#i-joint"/></svg><svg><use href="#t-box"/></svg></li>
            <li class="red"><svg><use href="#i-extrude"/></svg></li>
        </ol>
    </footer>
</body>
</html>
```

FILE: styles.css
```css
*,
*::before {
    box-sizing: border-box;
}

body {
    margin: 0;
    min-height: 100vh;
    display: flex;
    flex-direction: column;
    overflow-x: hidden;
    font-family: "Liberation Sans", Arial, sans-serif;
    font-size: 12px;
    color: #454545;
    background-color: #eff1ee;
}

button {
    display: flex;
    align-items: center;
    padding: 0;
    border: none;
    background: none;
    font: inherit;
    color: inherit;
    cursor: pointer;
}

a {
    color: inherit;
    text-decoration: none;
}

ul, ol {
    list-style: none;
    margin: 0;
    padding: 0;
}

svg {
    display: block;
    flex: none;
}

.icon-library {
    position: absolute;
    width: 0;
    height: 0;
}

.caret {
    border: 4px solid transparent;
    border-top: 5px solid #333;
    border-bottom: none;
}

/* Title bar */
.title-bar {
    display: flex;
    height: 31px;
    background-color: #cfd1ce;
}

.quick-tools {
    flex: 0 0 227px;
    display: flex;
    align-items: center;
    padding: 0 0 4px 9px;
    gap: 20px;
}

.quick-tools button {
    gap: 5px;
}

.quick-tools svg {
    width: 18px;
    height: 18px;
}

.quick-tools .caret {
    border-top-color: #555;
}

.quick-tools .faded .caret {
    border-top-color: #949694;
}

/* the tools on the left take 227px */
.doc-tab {
    flex: 0 0 calc((100% - 227px) * 0.54);
    display: flex;
    align-items: center;
    padding: 2px 8px 0 0;
    background-color: #b8bab7;
    border-right: 3px solid #c4c6c3;
    font-size: 14px;
    color: #666;
}

.doc-tab a {
    display: flex;
    align-items: center;
    gap: 5px;
    margin: 0 auto;
}

.doc-tab a svg {
    width: 18px;
    height: 18px;
    opacity: 0.6;
}

.doc-tab .close svg {
    width: 10px;
    height: 10px;
}

.doc-tab.active {
    flex: 1;
    padding-left: 76px;
    background-color: #eff1ee;
    border: none;
    color: #444;
}

.doc-tab.active a svg {
    opacity: 1;
}

/* Ribbon */
.ribbon {
    display: flex;
    height: 95px;
    overflow: hidden;
    border-bottom: 1px solid #e2e4e1;
}

.design {
    flex: 0 0 120px;
    height: 70px;
    margin: 13px 4px 0 13px;
    justify-content: center;
    gap: 6px;
    border: 2px solid #e0e2df;
    border-radius: 4px;
    font-size: 11px;
    font-weight: bold;
}

.ribbon-main {
    flex: 1;
}

.ribbon-tabs {
    display: flex;
    gap: 27px;
    height: 25px;
    padding-left: 14px;
    font-size: 11px;
}

.ribbon-tabs a {
    padding: 7px 14px 0;
    line-height: 13px;
    border-bottom: 3px solid transparent;
}

.ribbon-tabs .current {
    color: #2a93cf;
    border-bottom-color: #1d86c8;
}

.groups {
    display: flex;
    padding-top: 6px;
}

.group {
    display: flex;
    flex-direction: column;
    align-items: center;
    gap: 8px;
    height: 59px;
    padding: 1px 13px 0;
    border-right: 1px solid #d9dbd8;
}

.tools {
    display: flex;
    gap: 13px;
}

.tools svg {
    width: 36px;
    height: 36px;
}

.group-name {
    gap: 3px;
    line-height: 14px;
}

/* Workspace */
.workspace {
    position: relative;
    flex: 1;
    display: flex;
    min-height: 560px;
}

.scene {
    position: absolute;
    inset: 0;
    width: 100%;
    height: 100%;
}

.watermark {
    opacity: 0.5;
}

.watermark text {
    font-size: 35px;
    font-weight: bold;
    fill: #aaa;
}

.side {
    position: relative;
    flex: 0 0 348px;
    display: flex;
    flex-direction: column;
    padding: 4px 0 4px 5px;
}

.panel-head {
    display: flex;
    align-items: center;
    height: 29px;
    padding: 0 2px 0 4px;
    background-color: #eff0ee;
    border: 1px solid #d6d7d5;
    border-bottom-color: #bfc0be;
}

.panel-head h2 {
    flex: 1;
    margin: 0 0 0 11px;
    font-size: 11px;
    font-weight: normal;
    color: #6a6a6a;
}

.panel-head.comments h2 {
    margin-left: 23px;
}

.panel-head svg {
    width: 12px;
    height: 10px;
}

.grip {
    width: 4px;
    height: 13px;
    margin-left: 6px;
    border: 1px solid #999;
    border-width: 0 1px;
}

.tree-wrap {
    flex: 1;
    display: flex;
    margin: 3px 0 26px;
}

.scrollbar {
    flex: 0 0 7px;
    margin: 3px 0 0 4px;
    border-radius: 3px;
    background-color: #c5c6c5;
}

.thumb {
    height: 42%;
    border-radius: 3px;
    background-color: #959595;
}

.tree {
    flex: 1;
    display: grid;
    grid-auto-rows: 1fr;
    padding-left: 29px;
}

.tree li {
    display: flex;
    align-items: center;
    gap: 9px;
}

.toggle svg {
    width: 12px;
    height: 16px;
}

.chip {
    display: flex;
    align-items: center;
    height: 21px;
    padding: 0 11px 0 3px;
    gap: 9px;
    background-color: rgba(238, 240, 238, 0.75);
    white-space: nowrap;
}

.chip svg {
    width: 20px;
    height: 19px;
}

.chip svg.eye {
    width: 20px;
    height: 12px;
}

.chip span {
    margin-left: 6px;
}

.chip.part {
    padding: 0 8px 0 0;
}

.swatch {
    width: 6px;
    height: 23px;
    margin-right: -6px;
}

.root .toggle {
    margin-left: -21px;
}

.root .toggle svg {
    width: 14px;
    height: 14px;
}

.root .chip {
    gap: 4px;
    padding: 0;
}

.root .swatch {
    width: 4px;
    height: 18px;
    margin: 0;
}

.root .doc-name {
    display: flex;
    align-items: center;
    gap: 15px;
    height: 19px;
    padding: 0 11px 0 2px;
    margin-left: 2px;
    background-color: #888a88;
    color: #fff;
    font-size: 13px;
    font-weight: bold;
}

.root input {
    appearance: none;
    width: 16px;
    height: 16px;
    margin: 0;
    border: 1px solid #333;
    border-radius: 50%;
    background: radial-gradient(#222 2px, #fff 3px);
}

.salmon { background-color: #eba394; }
.swatch.yellow { background-color: #e9c462; }
.swatch.blue { background-color: #5697dc; }
.swatch.green { background-color: #7ccc5f; }
.swatch.orange { background-color: #e59c4c; }
.swatch.indigo { background-color: #4450c4; }
.swatch.red { background-color: #e2604d; }

/* Navigation bar */
.view-area {
    position: relative;
    flex: 1;
    display: flex;
    align-items: flex-end;
    justify-content: center;
    padding: 0 0 4px 52px;
}

.nav-bar {
    display: flex;
    height: 28px;
    padding-right: 10px;
    background-color: #eff0ee;
}

.nav-bar button {
    padding: 0 5px 0 1px;
    gap: 3px;
}

.nav-bar button:nth-child(2) {
    padding: 0 8px 0 4px;
}

.nav-bar svg {
    width: 20px;
    height: 20px;
}

.nav-bar .caret {
    border-width: 5px 3px 0;
}

.nav-bar .on {
    padding: 0 5px;
    background-color: #0b82d3;
}

.nav-bar .fit {
    padding: 0 14px 0 6px;
    gap: 5px;
}

/* Timeline */
.timeline {
    display: flex;
    height: 58px;
    overflow: hidden;
    border-top: 2px solid #cfd1cf;
    border-bottom: 1px solid #8f9299;
}

.playback {
    flex: 0 0 164px;
    display: flex;
    align-items: center;
    gap: 12px;
    height: 56px;
    padding-left: 12px;
}

.playback svg {
    width: 16px;
    height: 16px;
}

.features {
    flex: 1;
    display: grid;
    grid-template-columns: repeat(38, 1fr);
    height: 47px;
    margin-right: -7px;
    padding-top: 9px;
    border-bottom: 1px solid #c5c7c5;
}

.features li {
    display: flex;
    flex-wrap: wrap;
    align-content: flex-start;
    justify-content: space-around;
}

.features li::before {
    content: "";
    flex: 0 0 100%;
    height: 6px;
    margin-bottom: 2px;
    background-color: #e5a397;
    background-clip: padding-box;
    border-right: 4px solid transparent;
    border-left: 1px solid transparent;
}

/* the line under each icon is its tick on the time axis */
.features svg {
    width: 20px;
    height: 29px;
    margin-right: 3px;
    padding-bottom: 9px;
    background: linear-gradient(#b5b7b5, #b5b7b5) 60% 100% / 1px 6px no-repeat;
}

.features .yellow::before { background-color: #e4c660; }
.features .blue::before { background-color: #528fd3; }
.features .green::before { background-color: #7fca5e; }
.features .orange::before { background-color: #e09b4c; }
.features .indigo::before { background-color: #4750c2; }
.features .red::before { background-color: #e06350; }

.features .span-2 { grid-column: span 2; }
.features .span-3 { grid-column: span 3; }
.features .span-4 { grid-column: span 4; }
.features .span-6 { grid-column: span 6; }
```
